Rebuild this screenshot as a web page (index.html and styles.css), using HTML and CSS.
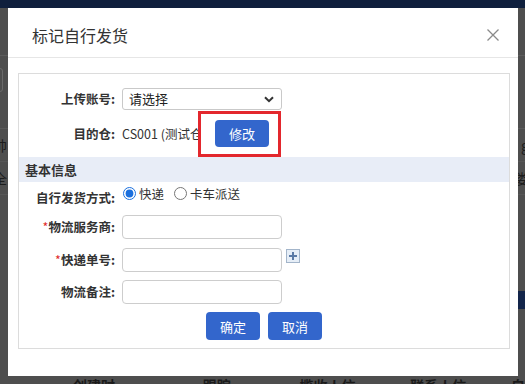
FILE: index.html
```html
<!DOCTYPE html>
<html lang="zh-CN">
<head>
  <meta charset="UTF-8">
  <title>标记自行发货</title>
  <link rel="stylesheet" href="styles.css">
</head>
<body>

  <!-- page behind the dialog -->
  <div class="page">
    <div class="topbar"></div>
    <div class="crumbs"></div>
    <div class="filters"><span class="filter-box"></span></div>
    <div class="list-row"><span class="cut">帅</span><span class="cut-right">g</span></div>
    <div class="list-row"><span class="cut">全</span><span class="cut-right">娄</span></div>
    <div class="list-body"><span class="side-btn"></span></div>
    <div class="thead">
      <span class="th th-time">创建时间</span>
      <span class="th th-track">跟踪号</span>
      <span class="th th-pick">揽收人信息</span>
      <span class="th th-contact">联系人信息</span>
      <span class="th th-last">自</span>
    </div>
  </div>

  <div class="modal">
    <div class="modal-head">
      <span class="modal-title">标记自行发货</span>
      <svg class="close" width="12" height="12" viewBox="0 0 12 12">
        <path d="M0.5 0.5 L11.5 11.5 M11.5 0.5 L0.5 11.5" stroke="#8a8a8a" stroke-width="1.3" fill="none"/>
      </svg>
    </div>

    <div class="modal-body">
      <div class="panel">
        <div class="row row-account">
          <label class="label">上传账号:</label>
          <div class="select">
            <span>请选择</span>
            <svg width="10" height="7" viewBox="0 0 10 7">
              <path d="M1 1.2 L5 5.2 L9 1.2" stroke="#333" stroke-width="2" fill="none"/>
            </svg>
          </div>
        </div>

        <div class="row">
          <label class="label">目的仓:</label>
          <span class="value">CS001 (测试仓库)</span>
          <span class="mark"><button class="btn btn-edit">修改</button></span>
        </div>

        <div class="section">基本信息</div>

        <div class="row row-radio">
          <label class="label label-radio">自行发货方式:</label>
          <label class="choice"><input type="radio" name="way" checked>快递</label>
          <label class="choice"><input type="radio" name="way">卡车派送</label>
        </div>

        <div class="row row-field">
          <label class="label"><em>*</em>物流服务商:</label>
          <input class="input" type="text">
        </div>

        <div class="row row-field">
          <label class="label"><em>*</em>快递单号:</label>
          <input class="input" type="text">
          <span class="plus">
            <svg width="12" height="12" viewBox="0 0 12 12">
              <path d="M6 2 V10 M2 6 H10" stroke="#5b7aa6" stroke-width="2" fill="none"/>
            </svg>
          </span>
        </div>

        <div class="row row-field row-last">
          <label class="label">物流备注:</label>
          <input class="input" type="text">
        </div>

        <div class="actions">
          <button class="btn">确定</button>
          <button class="btn">取消</button>
        </div>
      </div>
    </div>
  </div>

</body>
</html>
```

FILE: styles.css
```css
body {
  margin: 0;
  width: 525px;
  height: 384px;
  overflow: hidden;
  position: relative;
  background: #4e4e4e;
  font-family: "Noto Sans CJK SC", "Liberation Sans", sans-serif;
  color: #333;
}

/* dimmed page behind */
.page {
  height: 384px;
  overflow: hidden;
  display: flex;
  flex-direction: column;
  color: #1c1c1c;
}

.topbar {
  height: 8px;
  flex-shrink: 0;
  background: #0f1f3d;
}

.crumbs {
  height: 47px;
  flex-shrink: 0;
  border-bottom: 1px solid #5c5c5c;
}

.filters {
  height: 72px;
  flex-shrink: 0;
  border-bottom: 1px solid #5a5a5a;
}

.filter-box {
  display: block;
  width: 40px;
  height: 24px;
  margin: 12px 0 0 -37px;
  border: 1px solid #6a6a6a;
  border-radius: 3px;
  box-sizing: border-box;
}

.list-row {
  height: 32px;
  flex-shrink: 0;
  border-bottom: 1px solid #575757;
  display: flex;
  justify-content: space-between;
  align-items: center;
  font-size: 14px;
}

.cut {
  margin-left: -7px;
}

.cut-right {
  margin-right: -4px;
}

.list-body {
  height: 180px;
  flex-shrink: 0;
  display: flex;
  justify-content: flex-end;
}

.side-btn {
  width: 30px;
  height: 18px;
  margin: 96px -22px 0 0;
  background: #13254a;
}

.thead {
  display: flex;
  flex-shrink: 0;
  font-size: 14px;
  line-height: 20px;
  font-weight: bold;
  color: #1a1a1a;
}

.th-time { margin-left: 73px; }
.th-track { margin-left: 78px; }
.th-pick { margin-left: 58px; }
.th-contact { margin-left: 46px; }
.th-last { margin-left: 36px; }

/* dialog */
.modal {
  position: absolute;
  top: 8px;
  left: 8px;
  width: 510px;
  height: 368px;
  background: #fff;
}

.modal-head {
  height: 49px;
  border-bottom: 1px solid #e6e6e6;
  display: flex;
  align-items: center;
  justify-content: space-between;
  padding: 0 19px 0 24px;
}

.modal-title {
  font-size: 16px;
  line-height: 22px;
  color: #333;
  margin-top: 4px;
}

.close {
  margin-top: 4px;
}

.modal-body {
  padding: 15px 8px 0 10px;
}

.panel {
  border: 1px solid #dcdcdc;
  padding: 14px 0 8px;
}

.row {
  display: flex;
  align-items: center;
  font-size: 12px;
}

.label {
  width: 96px;
  margin-right: 7px;
  text-align: right;
  font-weight: bold;
  font-size: 12.5px;
  line-height: 16px;
  color: #333;
}

.label em {
  font-style: normal;
  font-weight: normal;
  color: #e02a2a;
}

.row-account {
  margin-bottom: 1px;
}

.select {
  width: 160px;
  height: 22px;
  box-sizing: border-box;
  border: 1px solid #c9c9c9;
  border-radius: 3px;
  display: flex;
  align-items: center;
  justify-content: space-between;
  padding: 0 7px 0 6px;
  font-size: 13px;
  line-height: 18px;
  color: #222;
}

.value {
  width: 76px;
  overflow: hidden;
  white-space: nowrap;
  font-size: 12.5px;
  line-height: 16px;
  color: #333;
}

.mark {
  display: block;
  border: 3px solid #e3272d;
  padding: 6px 9px 7px 14px;
}

.btn {
  display: block;
  width: 54px;
  height: 28px;
  padding: 0;
  border: 0;
  border-radius: 4px;
  background: #3366cc;
  color: #fff;
  font-family: inherit;
  font-size: 13px;
  cursor: pointer;
}

.btn-edit {
  height: 27px;
}

.section {
  height: 25px;
  line-height: 25px;
  padding-left: 6px;
  background: #e8edf7;
  font-size: 13px;
  font-weight: bold;
  color: #333;
}

.row-radio {
  align-items: flex-start;
  height: 20px;
  margin: 5px 0 8px;
}

.label-radio {
  padding-top: 3px;
}

.choice {
  display: flex;
  align-items: center;
  font-size: 12.5px;
  line-height: 13px;
  color: #333;
  margin-right: 9px;
}

.choice input {
  width: 13px;
  height: 13px;
  margin: 0 3px 0 1px;
  accent-color: #1a6fde;
}

.row-field {
  height: 24px;
  margin-bottom: 9px;
}

.row-last {
  margin-top: -1px;
  margin-bottom: 0;
}

.input {
  width: 160px;
  height: 24px;
  box-sizing: border-box;
  border: 1px solid #cdcdcd;
  border-radius: 4px;
  padding: 0 6px;
  margin: 0;
}

.plus {
  align-self: flex-start;
  margin: 1px 0 0 4px;
  width: 14px;
  height: 14px;
  box-sizing: border-box;
  border: 1px solid #a3b5ca;
  background: #e6eef7;
  display: flex;
  align-items: center;
  justify-content: center;
}

.actions {
  display: flex;
  justify-content: center;
  gap: 8px;
  margin-top: 8px;
}
```
